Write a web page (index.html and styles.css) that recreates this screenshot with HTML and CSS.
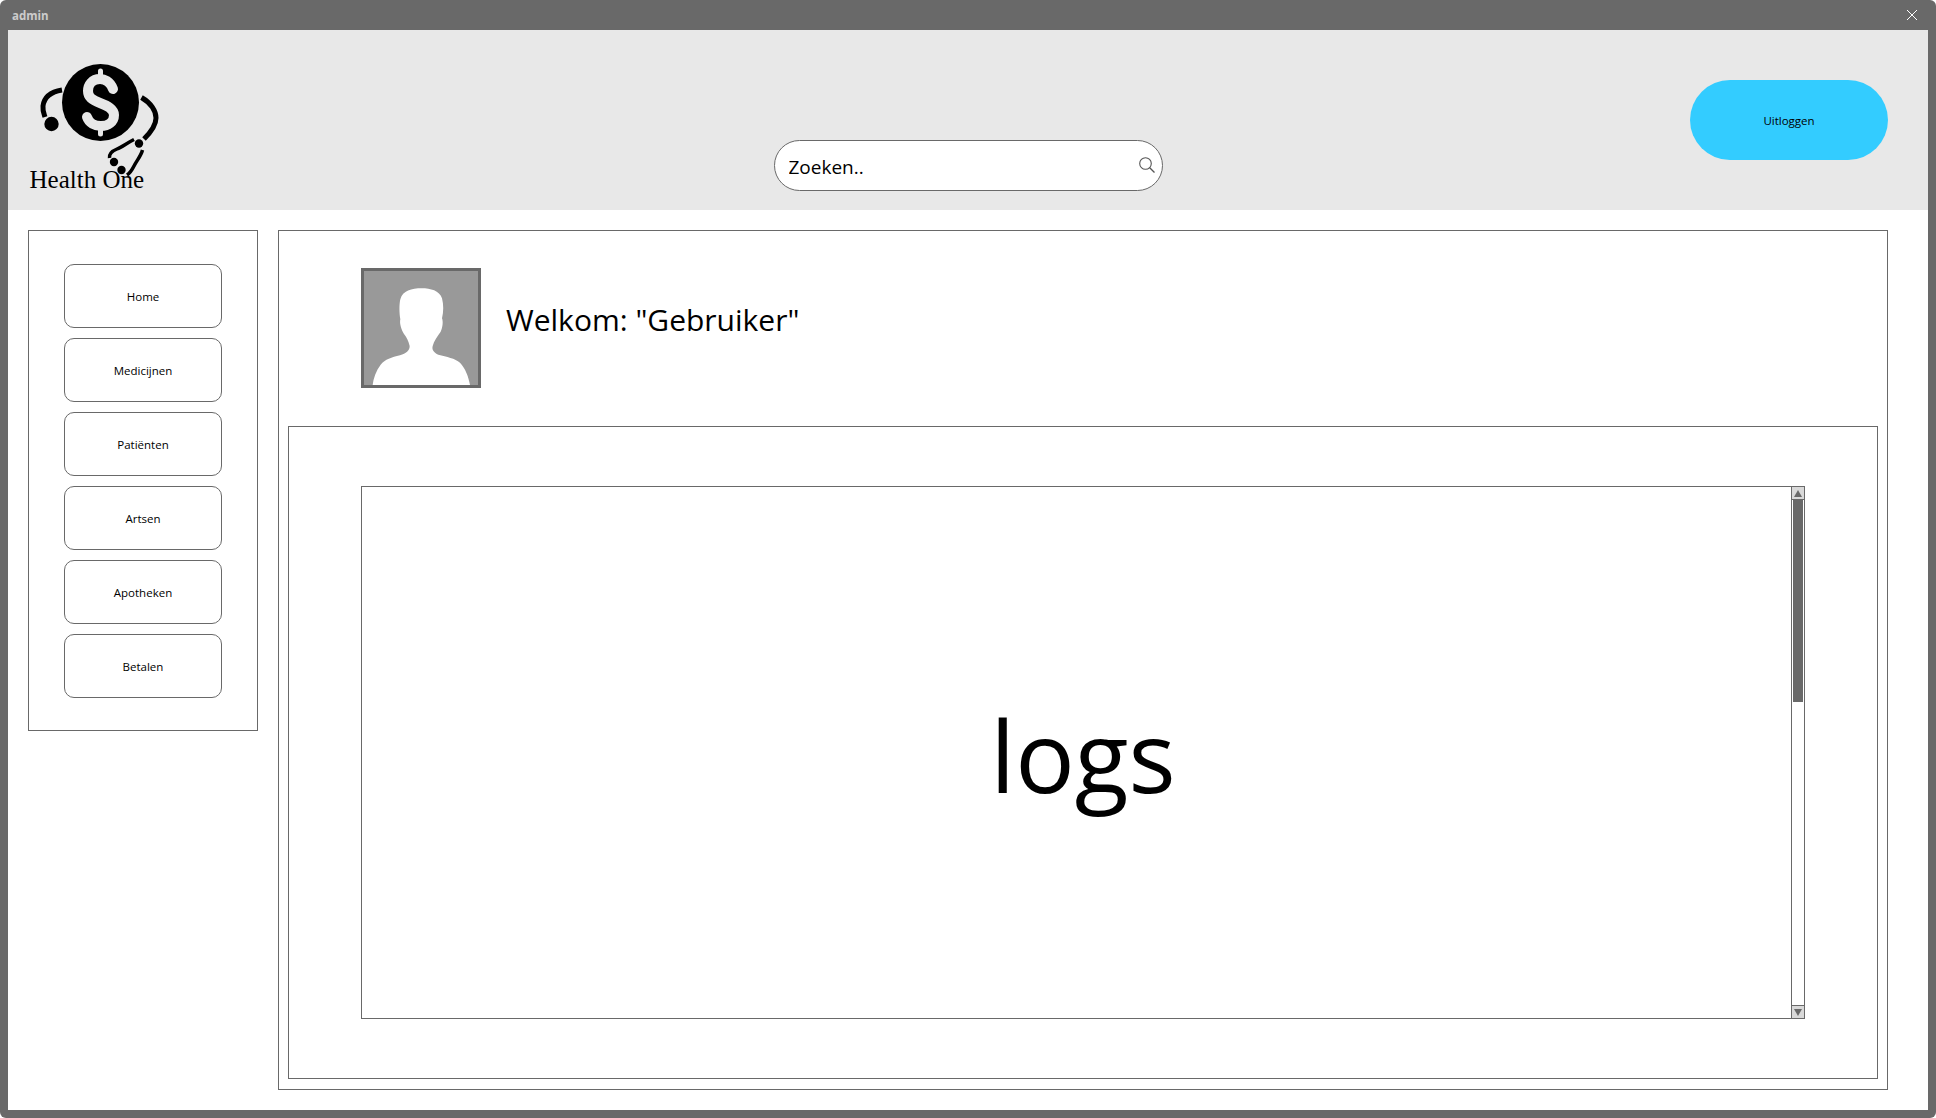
FILE: index.html
```html
<!DOCTYPE html>
<html lang="nl">
<head>
  <meta charset="UTF-8">
  <title>admin</title>
  <link rel="stylesheet" href="styles.css">
</head>
<body>
  <div class="window">
    <div class="titlebar">
      <span class="titlebar-name">admin</span>
      <svg class="close-icon" width="12" height="12" viewBox="0 0 12 12">
        <path d="M1 1 L11 11 M11 1 L1 11" stroke="#fff" stroke-width="1" fill="none"/>
      </svg>
    </div>

    <div class="content">
      <header class="header">
        <svg class="logo" width="140" height="150" viewBox="28 50 140 150">
          <circle cx="100.5" cy="102.5" r="38.5" fill="#000"/>
          <path d="M113 89 C110 81 104 79 100 79 C92 79 88 85 88 91 C88 97 92 100 100 103 C108 106 114 109 114 115 C114 122 108 126 101 126 C95 126 89 123 87 117" fill="none" stroke="#e8e8e8" stroke-width="10" stroke-linecap="round"/>
          <path d="M100.5 71 V79 M100.5 126 V134" stroke="#e8e8e8" stroke-width="5" stroke-linecap="round"/>
          <!-- stethoscope -->
          <path d="M62 90 C50 92 44 98 43 106 C42.5 111 44 114 45 117" fill="none" stroke="#000" stroke-width="5"/>
          <circle cx="51.5" cy="124" r="7.2" fill="#000"/>
          <path d="M141.5 97.5 C151 103 156 111 156 118 C156 124 151 132 144 139" fill="none" stroke="#000" stroke-width="5"/>
          <circle cx="139" cy="143.5" r="4.2" fill="#000"/>
          <path d="M134 139.5 C127 143 122 147 117 149 C112 151 109 154 109.5 158" fill="none" stroke="#000" stroke-width="3.5"/>
          <path d="M142.5 150 C141 156 137 160 134 166 C132 170 130 173 127 175" fill="none" stroke="#000" stroke-width="3.5"/>
          <circle cx="114" cy="162" r="4.2" fill="#000"/>
          <circle cx="121.5" cy="170" r="4.2" fill="#000"/>
          <text class="logo-text" x="29.5" y="188">Health One</text>
        </svg>

        <label class="search">
          <input class="search-input" type="text" placeholder="Zoeken..">
          <svg class="search-icon" width="18" height="18" viewBox="0 0 18 18">
            <circle cx="7.5" cy="7.5" r="5.8" fill="none" stroke="#555" stroke-width="1.1"/>
            <path d="M11.7 11.7 L16.5 16.5" stroke="#555" stroke-width="1.3"/>
          </svg>
        </label>

        <div class="header-right">
          <button class="logout" type="button">Uitloggen</button>
        </div>
      </header>

      <div class="body">
        <nav class="sidebar">
          <button class="nav-btn" type="button">Home</button>
          <button class="nav-btn" type="button">Medicijnen</button>
          <button class="nav-btn" type="button">Patiënten</button>
          <button class="nav-btn" type="button">Artsen</button>
          <button class="nav-btn" type="button">Apotheken</button>
          <button class="nav-btn" type="button">Betalen</button>
        </nav>

        <main class="main">
          <div class="welcome">
            <div class="avatar">
              <svg width="114" height="114" viewBox="312 153 342 342">
                <path fill="#fff" d="M485 205 C455 205 428 212 421 238 C417 255 418 280 421 298 C418 310 424 330 432 342 C440 352 445 362 449 378 C449 392 438 400 420 406 C395 412 375 418 362 434 C348 452 340 475 338 495 L630 495 C626 470 616 445 600 428 C585 415 560 410 535 404 C522 398 515 390 518 378 C522 362 532 350 542 335 C548 322 550 305 546 295 C551 275 551 255 546 235 C538 212 512 205 485 205 Z"/>
              </svg>
            </div>
            <h1 class="welcome-text">Welkom: "Gebruiker"</h1>
          </div>

          <section class="panel">
            <div class="logbox">
              <span class="logbox-label">logs</span>
              <div class="scrollbar">
                <div class="scroll-arrow scroll-arrow-up"><span class="tri-up"></span></div>
                <div class="scroll-track"><div class="scroll-thumb"></div></div>
                <div class="scroll-arrow scroll-arrow-down"><span class="tri-down"></span></div>
              </div>
            </div>
          </section>
        </main>
      </div>
    </div>
  </div>
</body>
</html>
```

FILE: styles.css
```css
* {
  box-sizing: border-box;
}
html, body {
  margin: 0;
  height: 100%;
  background: #fff;
}
body {
  font-family: "Open Sans", "Noto Sans", sans-serif;
  color: #000;
  overflow: hidden;
}
.window {
  display: flex;
  flex-direction: column;
  width: 1936px;
  height: 1118px;
  padding: 0 8px 8px;
  background: #696969;
  border-radius: 6px;
}
.titlebar {
  display: flex;
  align-items: center;
  justify-content: space-between;
  height: 30px;
  flex: none;
  padding: 0 10px 0 4px;
}
.titlebar-name {
  font-size: 11.5px;
  font-weight: 700;
  color: #ccc;
}
.close-icon {
  margin-top: -1px;
}
.content {
  display: flex;
  flex-direction: column;
  flex: 1;
  min-height: 0;
  background: #fff;
}

/* header */
.header {
  display: grid;
  grid-template-columns: 1fr auto 1fr;
  height: 180px;
  flex: none;
  background: #e8e8e8;
}
.logo {
  display: block;
  margin: 20px 0 0 20px;
}
.logo-text {
  font-family: "Liberation Serif", serif;
  font-size: 25px;
  fill: #000;
}
.search {
  display: flex;
  align-items: center;
  width: 389px;
  height: 51px;
  margin-top: 110px;
  padding: 0 6px 0 14px;
  background: #fff;
  border: 1px solid #696969;
  border-radius: 26px;
}
.search-input {
  flex: 1;
  min-width: 0;
  margin-top: 2px;
  border: none;
  outline: none;
  padding: 0;
  background: transparent;
  font-family: inherit;
  font-size: 19px;
  color: #000;
}
.search-input::placeholder {
  color: #000;
  opacity: 1;
}
.search-icon {
  margin-top: -1px;
}
.header-right {
  display: flex;
  justify-content: flex-end;
  padding: 50px 40px 0 0;
}
.logout {
  width: 198px;
  height: 80px;
  border: none;
  border-radius: 40px;
  background: #33ccff;
  font-family: inherit;
  font-size: 11.5px;
  color: #000;
}

/* sidebar + main */
.body {
  display: flex;
  align-items: flex-start;
  gap: 20px;
  flex: 1;
  min-height: 0;
  padding: 20px 40px 20px 20px;
}
.sidebar {
  display: flex;
  flex-direction: column;
  gap: 10px;
  width: 230px;
  height: 501px;
  flex: none;
  padding: 33px 35px;
  border: 1px solid #696969;
}
.nav-btn {
  height: 64px;
  flex: none;
  background: #fff;
  border: 1px solid #696969;
  border-radius: 10px;
  font-family: inherit;
  font-size: 11.5px;
  color: #000;
}
.main {
  display: flex;
  flex-direction: column;
  flex: 1;
  align-self: stretch;
  min-width: 0;
  padding: 0 9px 10px;
  border: 1px solid #696969;
}
.welcome {
  display: flex;
  align-items: flex-start;
  gap: 25px;
  height: 195px;
  flex: none;
  padding: 37px 0 0 73px;
}
.avatar {
  width: 120px;
  height: 120px;
  flex: none;
  background: #999;
  border: 3px solid #696969;
}
.avatar svg {
  display: block;
}
.welcome-text {
  margin: 30px 0 0;
  font-size: 30px;
  font-weight: 400;
  line-height: 44px;
}
.panel {
  flex: 1;
  min-height: 0;
  padding: 59px 72px;
  border: 1px solid #696969;
}
.logbox {
  position: relative;
  display: flex;
  align-items: center;
  justify-content: center;
  height: 100%;
  border: 1px solid #696969;
}
.logbox-label {
  font-size: 99px;
  line-height: 1;
  margin-top: 4px;
}
.scrollbar {
  position: absolute;
  top: -1px;
  right: -1px;
  bottom: -1px;
  display: flex;
  flex-direction: column;
  width: 14px;
  border: 1px solid #696969;
}
.scroll-arrow {
  display: flex;
  align-items: center;
  justify-content: center;
  height: 13px;
  flex: none;
  background: #d9d9d9;
  border-bottom: 1px solid #696969;
}
.scroll-arrow-down {
  border-bottom: none;
  border-top: 1px solid #696969;
}
.tri-up, .tri-down {
  width: 0;
  height: 0;
  border-left: 4.5px solid transparent;
  border-right: 4.5px solid transparent;
}
.tri-up {
  border-bottom: 7px solid #696969;
}
.tri-down {
  border-top: 7px solid #696969;
}
.scroll-track {
  flex: 1;
  padding: 0 1px;
}
.scroll-thumb {
  height: 202px;
  background: #696969;
}
```
